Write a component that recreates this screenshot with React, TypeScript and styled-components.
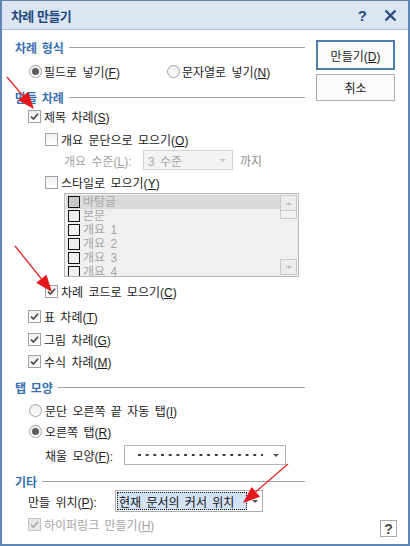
import React from 'react';
import styled, { createGlobalStyle } from 'styled-components';

const GlobalStyle = createGlobalStyle`
  html, body {
    margin: 0;
    padding: 0;
    background: #ffffff;
  }
  body {
    font-family: "Liberation Sans", "Noto Sans CJK KR", sans-serif;
    font-size: 12px;
    word-spacing: 2px;
    color: #1c1c1c;
  }
  * {
    box-sizing: border-box;
  }
`;

const Dialog = styled.div`
  position: relative;
  width: 410px;
  height: 546px;
  display: flex;
  flex-direction: column;
  background: #ffffff;
  border: 2px solid #5f86b2;
  border-top-width: 1px;
`;

const TitleBar = styled.div`
  flex: none;
  height: 29px;
  display: flex;
  align-items: center;
  padding: 0 11px 0 9px;
  background: #dbe6f2;
  border-bottom: 1px solid #a9bed6;
`;

const Title = styled.div`
  flex: 1;
  font-family: "Noto Sans CJK KR", sans-serif;
  font-size: 13px;
  font-weight: bold;
  letter-spacing: -0.6px;
  word-spacing: 1px;
  color: #234a7c;
`;

const TitleHelp = styled.span`
  font-family: "Liberation Sans", sans-serif;
  font-size: 15px;
  font-weight: bold;
  color: #2b4d7e;
  margin-right: 17px;
`;

const CloseIcon = styled.svg`
  display: block;
  width: 13px;
  height: 13px;
`;

const Body = styled.div`
  flex: 1;
  display: flex;
  padding: 8px 13px 7px 13px;
`;

const LeftColumn = styled.div`
  width: 290px;
  display: flex;
  flex-direction: column;
`;

const RightColumn = styled.div`
  width: 79px;
  margin-left: 11px;
  padding-top: 2px;
  display: flex;
  flex-direction: column;
  gap: 4px;
`;

const DialogButton = styled.div<{ $primary?: boolean }>`
  height: ${(p) => (p.$primary ? 30 : 27)}px;
  display: flex;
  align-items: center;
  justify-content: center;
  background: #fbfbfb;
  border: ${(p) => (p.$primary ? '2px solid #4d7eb0' : '1px solid #adadad')};
  font-size: 12px;
  color: #1c1c1c;
`;

const HelpButton = styled.div`
  margin-top: auto;
  margin-right: -2px;
  align-self: flex-end;
  width: 17px;
  height: 17px;
  display: flex;
  align-items: center;
  justify-content: center;
  border: 1px solid #a9a9a9;
  font-size: 14px;
  font-weight: bold;
  color: #4a4a4a;
`;

const SectionHeader = styled.div<{ $mt?: number }>`
  height: 18px;
  margin-top: ${(p) => p.$mt ?? 0}px;
  display: flex;
  align-items: center;
  font-family: "Noto Sans CJK KR", sans-serif;
  font-weight: bold;
  font-size: 12px;
  color: #3570b0;

  &::after {
    content: '';
    flex: 1;
    margin-left: 5px;
    border-top: 1px solid #a3a3a3;
  }
`;

const OptionRow = styled.div<{ $mt?: number; $indent: number; $disabled?: boolean }>`
  height: 20px;
  margin-top: ${(p) => p.$mt ?? 0}px;
  padding-left: ${(p) => p.$indent}px;
  display: flex;
  align-items: center;
  gap: 3px;
  white-space: nowrap;
  color: ${(p) => (p.$disabled ? '#a3a3a3' : '#1c1c1c')};
`;

const RadioRow = styled.div<{ $mt?: number }>`
  height: 20px;
  margin-top: ${(p) => p.$mt ?? 0}px;
  padding-left: 14px;
  display: grid;
  grid-template-columns: 138px auto;
  align-items: center;
`;

const Choice = styled.div`
  display: flex;
  align-items: center;
  gap: 2px;
  white-space: nowrap;
`;

const CheckBox = styled.span<{ $disabled?: boolean }>`
  flex: none;
  width: 13px;
  height: 13px;
  display: flex;
  align-items: center;
  justify-content: center;
  border: 1px solid ${(p) => (p.$disabled ? '#c4c4c4' : '#a2a2a2')};
  background: ${(p) => (p.$disabled ? '#e9e9e9' : 'linear-gradient(#f0f0f0, #ffffff)')};
`;

const RadioCircle = styled.span<{ $checked?: boolean }>`
  flex: none;
  position: relative;
  width: 13px;
  height: 13px;
  border-radius: 50%;
  border: 1px solid #a0a0a0;
  background: linear-gradient(#eeeeee, #ffffff);

  &::after {
    content: '';
    display: ${(p) => (p.$checked ? 'block' : 'none')};
    position: absolute;
    left: 2px;
    top: 2px;
    width: 7px;
    height: 7px;
    border-radius: 50%;
    background: #5c5c5c;
  }
`;

const FieldRow = styled.div<{ $mt?: number; $indent: number; $height?: number }>`
  height: ${(p) => p.$height ?? 20}px;
  margin-top: ${(p) => p.$mt ?? 0}px;
  padding-left: ${(p) => p.$indent}px;
  display: flex;
  align-items: center;
  white-space: nowrap;
`;

const FieldLabel = styled.span<{ $width: number; $disabled?: boolean }>`
  flex: none;
  width: ${(p) => p.$width}px;
  color: ${(p) => (p.$disabled ? '#a3a3a3' : '#1c1c1c')};
`;

const DisabledSelect = styled.div`
  width: 90px;
  height: 20px;
  display: flex;
  align-items: center;
  justify-content: space-between;
  padding: 0 6px 0 4px;
  border: 1px solid #d3d3d3;
  background: #f3f3f3;
  color: #a8a8a8;
`;

const Suffix = styled.span`
  margin-left: 7px;
  color: #8f8f8f;
`;

const DropArrow = styled.span<{ $color?: string }>`
  flex: none;
  width: 0;
  height: 0;
  border-left: 3px solid transparent;
  border-right: 3px solid transparent;
  border-top: 3px solid ${(p) => p.$color ?? '#555555'};
`;

const FillSelect = styled.div`
  width: 162px;
  height: 20px;
  display: flex;
  align-items: center;
  justify-content: space-between;
  padding: 0 6px 0 13px;
  border: 1px solid #b5b5b5;
  background: #ffffff;
`;

const DotLine = styled.span`
  width: 125px;
  height: 2px;
  background-image: linear-gradient(to right, #3a3a3a 3px, transparent 3px);
  background-size: 7.7px 2px;
`;

const Combo = styled.div`
  width: 148px;
  height: 22px;
  display: flex;
  border: 1px solid #adadad;
  background: #ffffff;
`;

const ComboValue = styled.div`
  flex: 1;
  margin: 1px 0 1px 1px;
  padding-left: 1px;
  display: flex;
  align-items: center;
  border: 1px dotted #111111;
  background: #d3e3f5;
  color: #111111;
  white-space: nowrap;
  overflow: hidden;
`;

const ComboButton = styled.div`
  width: 15px;
  display: flex;
  align-items: center;
  justify-content: center;
`;

const ListBox = styled.div<{ $mt?: number }>`
  width: 235px;
  height: 84px;
  margin-top: ${(p) => p.$mt ?? 0}px;
  margin-left: 49px;
  display: flex;
  border: 1px solid #b9b9b9;
  background: #f0f0f0;
  overflow: hidden;
`;

const ListItems = styled.div`
  flex: 1;
  padding: 1px 0 0 1px;
  overflow: hidden;
`;

const ListItem = styled.div<{ $selected?: boolean }>`
  height: 14px;
  display: flex;
  align-items: center;
  gap: 3px;
  padding-left: 2px;
  background: ${(p) => (p.$selected ? '#dadada' : 'transparent')};
  color: #a6a6a6;
  line-height: 14px;
  white-space: nowrap;
`;

const ItemBox = styled.span<{ $selected?: boolean }>`
  flex: none;
  width: 12px;
  height: 12px;
  border: 1px solid #111111;
  background: ${(p) => (p.$selected ? '#c9c9c9' : 'transparent')};
`;

const ScrollBar = styled.div`
  width: 17px;
  margin: 1px 1px 1px 0;
  display: flex;
  flex-direction: column;
`;

const ScrollButton = styled.div`
  height: 16px;
  display: flex;
  align-items: center;
  justify-content: center;
  border: 1px solid #cacaca;
  background: #ececec;
`;

const ScrollThumb = styled.div`
  height: 8px;
  border: 1px solid #cacaca;
  border-top: none;
  background: #f2f2f2;
`;

const ScrollTrack = styled.div`
  flex: 1;
`;

const UpArrow = styled.span`
  width: 0;
  height: 0;
  border-left: 3px solid transparent;
  border-right: 3px solid transparent;
  border-bottom: 3px solid #b9b9b9;
`;

const Overlay = styled.svg`
  position: absolute;
  left: -2px;
  top: -1px;
  width: 410px;
  height: 546px;
  pointer-events: none;
`;

const Check = ({ disabled }: { disabled?: boolean }) => (
  <svg width="9" height="9" viewBox="0 0 9 9">
    <path
      d="M1 4.6 L3.4 7 L8 1.8"
      fill="none"
      stroke={disabled ? '#a9a9a9' : '#4a4a4a'}
      strokeWidth="1.7"
    />
  </svg>
);

const Box = ({ checked, disabled }: { checked?: boolean; disabled?: boolean }) => (
  <CheckBox $disabled={disabled}>{checked && <Check disabled={disabled} />}</CheckBox>
);

const ARROWS: [number, number, number, number][] = [
  [7, 77, 34, 109],
  [15, 246, 52, 292],
  [288, 464, 243, 503],
];

const RedArrow = ({ x1, y1, x2, y2 }: { x1: number; y1: number; x2: number; y2: number }) => {
  const len = Math.hypot(x2 - x1, y2 - y1);
  const ux = (x2 - x1) / len;
  const uy = (y2 - y1) / len;
  const bx = x2 - ux * 17;
  const by = y2 - uy * 17;
  const w = 6.5;
  const pts = `${x2},${y2} ${bx - uy * w},${by + ux * w} ${bx + uy * w},${by - ux * w}`;
  return (
    <g>
      <line x1={x1} y1={y1} x2={bx} y2={by} stroke="#e3262b" strokeWidth="1.3" />
      <polygon points={pts} fill="#e5171d" />
    </g>
  );
};

const STYLES = ['바탕글', '본문', '개요 1', '개요 2', '개요 3', '개요 4'];

export default function App() {
  return (
    <>
      <GlobalStyle />
      <Dialog>
        <TitleBar>
          <Title>차례 만들기</Title>
          <TitleHelp>?</TitleHelp>
          <CloseIcon viewBox="0 0 13 13">
            <path d="M1.5 1.5 L11.5 11.5 M11.5 1.5 L1.5 11.5" stroke="#2b4d7e" strokeWidth="2.4" />
          </CloseIcon>
        </TitleBar>

        <Body>
          <LeftColumn>
            <SectionHeader>차례 형식</SectionHeader>
            <RadioRow $mt={5}>
              <Choice>
                <RadioCircle $checked />
                <span>필드로 넣기(<u>F</u>)</span>
              </Choice>
              <Choice>
                <RadioCircle />
                <span>문자열로 넣기(<u>N</u>)</span>
              </Choice>
            </RadioRow>

            <SectionHeader $mt={7}>만들 차례</SectionHeader>
            <OptionRow $indent={13}>
              <Box checked />
              <span>제목 차례(<u>S</u>)</span>
            </OptionRow>
            <OptionRow $indent={30} $mt={3}>
              <Box />
              <span>개요 문단으로 모으기(<u>O</u>)</span>
            </OptionRow>
            <FieldRow $indent={49} $mt={1}>
              <FieldLabel $width={79} $disabled>
                개요 수준(<u>L</u>):
              </FieldLabel>
              <DisabledSelect>
                <span>3 수준</span>
                <DropArrow $color="#c2c2c2" />
              </DisabledSelect>
              <Suffix>까지</Suffix>
            </FieldRow>
            <OptionRow $indent={30} $mt={2}>
              <Box />
              <span>스타일로 모으기(<u>Y</u>)</span>
            </OptionRow>
            <ListBox $mt={1}>
              <ListItems>
                {STYLES.map((name, i) => (
                  <ListItem key={name} $selected={i === 0}>
                    <ItemBox $selected={i === 0} />
                    <span>{name}</span>
                  </ListItem>
                ))}
              </ListItems>
              <ScrollBar>
                <ScrollButton>
                  <UpArrow />
                </ScrollButton>
                <ScrollThumb />
                <ScrollTrack />
                <ScrollButton>
                  <DropArrow $color="#b9b9b9" />
                </ScrollButton>
              </ScrollBar>
            </ListBox>
            <OptionRow $indent={30} $mt={4}>
              <Box checked />
              <span>차례 코드로 모으기(<u>C</u>)</span>
            </OptionRow>
            <OptionRow $indent={13} $mt={5}>
              <Box checked />
              <span>표 차례(<u>T</u>)</span>
            </OptionRow>
            <OptionRow $indent={13} $mt={3}>
              <Box checked />
              <span>그림 차례(<u>G</u>)</span>
            </OptionRow>
            <OptionRow $indent={13} $mt={2}>
              <Box checked />
              <span>수식 차례(<u>M</u>)</span>
            </OptionRow>

            <SectionHeader $mt={7}>탭 모양</SectionHeader>
            <OptionRow $indent={14} $mt={4}>
              <RadioCircle />
              <span>문단 오른쪽 끝 자동 탭(<u>I</u>)</span>
            </OptionRow>
            <OptionRow $indent={14} $mt={1}>
              <RadioCircle $checked />
              <span>오른쪽 탭(<u>R</u>)</span>
            </OptionRow>
            <FieldRow $indent={30} $mt={4}>
              <FieldLabel $width={79}>
                채울 모양(<u>F</u>):
              </FieldLabel>
              <FillSelect>
                <DotLine />
                <DropArrow />
              </FillSelect>
            </FieldRow>

            <SectionHeader $mt={7}>기타</SectionHeader>
            <FieldRow $indent={13} $height={22}>
              <FieldLabel $width={87}>
                만들 위치(<u>P</u>):
              </FieldLabel>
              <Combo>
                <ComboValue>현재 문서의 커서 위치</ComboValue>
                <ComboButton>
                  <DropArrow />
                </ComboButton>
              </Combo>
            </FieldRow>
            <OptionRow $indent={13} $mt={2} $disabled>
              <Box checked disabled />
              <span>하이퍼링크 만들기(<u>H</u>)</span>
            </OptionRow>
          </LeftColumn>

          <RightColumn>
            <DialogButton $primary>
              <span>만들기(<u>D</u>)</span>
            </DialogButton>
            <DialogButton>취소</DialogButton>
            <HelpButton>?</HelpButton>
          </RightColumn>
        </Body>

        <Overlay viewBox="0 0 410 546">
          {ARROWS.map(([x1, y1, x2, y2]) => (
            <RedArrow key={`${x1}-${y1}`} x1={x1} y1={y1} x2={x2} y2={y2} />
          ))}
        </Overlay>
      </Dialog>
    </>
  );
}
